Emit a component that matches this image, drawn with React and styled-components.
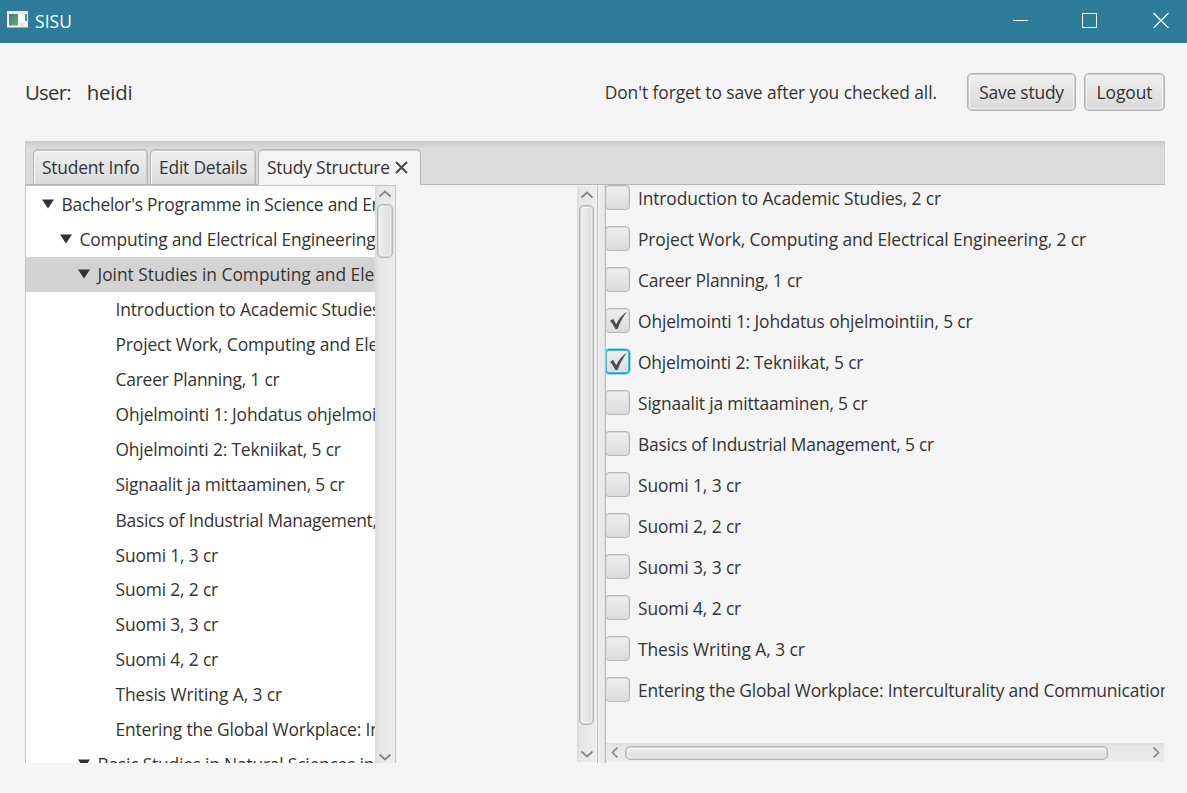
import React from 'react';
import styled, { createGlobalStyle } from 'styled-components';

const GlobalStyle = createGlobalStyle`
  * { box-sizing: border-box; }
  body {
    margin: 0;
    background: #f4f4f4;
    color: #333;
    font: 17.4px/24px "Open Sans", "Noto Sans", sans-serif;
    overflow: hidden;
  }
`;

const Label = styled.span`
  white-space: pre;
  letter-spacing: ${(p) => p.$ls ?? -0.2}px;
`;

const Window = styled.div`
  width: 1187px;
  height: 793px;
  display: flex;
  flex-direction: column;
`;

const TitleBar = styled.header`
  height: 43px;
  flex: none;
  display: flex;
  align-items: flex-start;
  padding: 10px 18px 0 6px;
  background: #2d7d9a;
  color: #fff;
`;

const Title = styled.div`
  margin-left: 6px;
  flex: 1;
  font-size: 17.4px;
  line-height: 23px;
`;

const Controls = styled.div`
  display: flex;
  gap: 54px;
  padding-top: 2px;
  svg:last-child { margin-left: 1px; }
`;

const Header = styled.div`
  height: 98px;
  flex: none;
  display: flex;
  align-items: center;
  padding: 0 22px 0 25px;
`;

const UserInfo = styled.div`
  flex: 1;
  display: flex;
  gap: 16px;
  font-size: 20.4px;
`;

const Button = styled.button`
  height: 38px;
  width: ${(p) => p.$w}px;
  margin-left: ${(p) => p.$gap}px;
  padding: 0;
  border: 1px solid #b5b5b5;
  border-radius: 5px;
  background: linear-gradient(#efefef, #d9d9d9);
  box-shadow: inset 0 0 0 1px #cacaca, inset 0 0 0 2px rgba(255, 255, 255, 0.6);
  color: #333;
  font: inherit;
`;

const TabPane = styled.section`
  width: 1140px;
  height: 622px;
  margin-left: 25px;
  display: flex;
  flex-direction: column;
`;

const TabStrip = styled.nav`
  height: 44px;
  flex: none;
  display: flex;
  align-items: flex-end;
  gap: 2px;
  padding-left: 7px;
  border-left: 1px solid #cfcfcf;
  background: linear-gradient(#cbcbcb, #dcdcdc 8px);
  box-shadow: inset 0 -1px #b5b5b5, inset -1px 0 #cfcfcf;
`;

const Tab = styled.div`
  width: ${(p) => p.$w}px;
  height: 36px;
  display: flex;
  align-items: center;
  padding-left: 8px;
  border: 1px solid #b5b5b5;
  border-bottom-color: ${(p) => (p.$active ? '#f4f4f4' : '#b0b0b0')};
  border-radius: 5px 5px 0 0;
  background: ${(p) => (p.$active ? '#f4f4f4' : 'linear-gradient(#efefef, #dadada)')};
  box-shadow: ${(p) => (p.$active ? 'inset 0 1px #d0d0d0' : 'inset 0 1px #cdcdcd, inset 1px 2px #f6f6f6, inset -1px 0 #d0d0d0')};
  svg { margin-left: 5px; }
`;

const Content = styled.div`
  flex: 1;
  min-height: 0;
  display: flex;
`;

const Tree = styled.div`
  width: 371px;
  display: flex;
  border: 1px solid #c4c4c4;
  border-bottom: none;
  background: #fff;
`;

const TreeRows = styled.div`
  flex: 1;
  min-width: 0;
  padding-top: 1px;
  overflow: hidden;
`;

const TreeRow = styled.div`
  height: 35px;
  display: flex;
  align-items: center;
  padding-left: ${(p) => p.$indent}px;
  padding-bottom: ${(p) => (p.$low ? 0 : 1)}px;
  padding-top: ${(p) => (p.$low ? 1 : 0)}px;
  background: ${(p) => (p.$selected ? '#d3d3d3' : 'transparent')};
  svg { flex: none; margin-right: 7.5px; }
`;

const Track = styled.div`
  flex: none;
  display: flex;
  flex-direction: ${(p) => (p.$horizontal ? 'row' : 'column')};
  align-items: center;
  ${(p) => (p.$horizontal
    ? 'height: 19px; margin-right: 1px; padding: 0 1px 0 2px; background: linear-gradient(#dadada, #e6e6e6 3px, #ececec);'
    : `width: ${p.$w}px; padding: ${p.$pad}; background: linear-gradient(90deg, #dadada, #e6e6e6 3px, #ececec);`)}
`;

const Thumb = styled.div`
  ${(p) => (p.$horizontal
    ? `height: 14px; width: ${p.$size}px; margin: 1px auto 0 3px; background: linear-gradient(#f0f0f0, #dadada);`
    : `width: ${p.$w}px; height: ${p.$size}px; margin: 4px 0 auto; background: linear-gradient(90deg, #f0f0f0, #dcdcdc);`)}
  border: 1px solid #b5b5b5;
  border-radius: 5px;
  box-shadow: inset 0 0 0 1px #d2d2d2, inset 0 0 0 2px rgba(255, 255, 255, 0.4);
`;

const MiddlePane = styled.div`
  width: 201px;
  display: flex;
  justify-content: flex-end;
  padding: 1px 1px 1px 0;
`;

const Divider = styled.div`
  width: 9px;
  border: solid #bdbdbd;
  border-width: 0 1px;
  background: linear-gradient(90deg, #f4f4f4, #e8e8e8 40%, #ededed 75%, #d6d6d6);
`;

const CoursePane = styled.div`
  flex: 1;
  min-width: 0;
  display: flex;
  flex-direction: column;
  padding-bottom: 1px;
`;

const CourseList = styled.div`
  flex: 1;
  min-height: 0;
  display: flex;
  flex-direction: column;
  gap: 16px;
  overflow: hidden;
`;

const CourseRow = styled.label`
  height: 25px;
  flex: none;
  display: flex;
  align-items: center;
  gap: 8px;
  margin-left: -1px;
`;

const CheckBox = styled.span`
  width: 25px;
  height: 25px;
  flex: none;
  display: flex;
  align-items: center;
  justify-content: center;
  padding-left: 1px;
  border: 1px solid ${(p) => (p.$focused ? '#039ed3' : '#b7b7b7')};
  border-radius: 4px;
  background: linear-gradient(#efefef, #dbdbdb);
  box-shadow: inset 0 0 0 1px ${(p) => (p.$focused ? '#4db9de, 0 0 0 1px #a5dcee' : '#dadada')};
`;

const AppIcon = () => (
  <svg width="23" height="19" viewBox="0 0 23 19">
    <defs>
      <linearGradient id="scene" x1="0" y1="0" x2="1" y2="1">
        <stop offset="0" stopColor="#3f719b" />
        <stop offset="1" stopColor="#5cb85f" />
      </linearGradient>
    </defs>
    <rect x="0.5" y="1" width="22" height="17.5" fill="#60717b" />
    <rect x="1" y="1" width="21" height="16.5" fill="#e6e6e4" />
    <rect x="2" y="3.5" width="19" height="13" fill="#f4f4f2" />
    <rect x="3" y="4" width="9" height="11.5" fill="url(#scene)" />
    <rect x="14" y="4" width="4" height="8" fill="#fff" />
    <rect x="14" y="13" width="4" height="3" fill="#e4e4e4" />
    <rect x="19" y="4" width="2" height="7" fill="#4c9480" />
  </svg>
);

const Disclosure = () => (
  <svg width="12" height="10" viewBox="0 0 12 10"><path d="M0 0.5H12L6 9.5Z" fill="#333" /></svg>
);

const ARROWS = {
  up: 'M1.5 8.5L7 3.5L12.5 8.5',
  down: 'M1.5 3.5L7 8.5L12.5 3.5',
  left: 'M9.5 1.5L4.5 6.5L9.5 11.5',
  right: 'M4.5 1.5L9.5 6.5L4.5 11.5',
};

const ArrowSvg = styled.svg`
  flex: none;
`;

const Arrow = ({ dir }) => {
  const h = dir === 'up' || dir === 'down' ? 12 : 13;
  return (
    <ArrowSvg width="14" height={h} viewBox={`0 0 14 ${h}`}>
      <path d={ARROWS[dir]} fill="none" stroke="#858585" strokeWidth="1.7" />
    </ArrowSvg>
  );
};

const Check = () => (
  <svg width="19" height="19" viewBox="0 0 19 19">
    <path d="M1 9.8L4.2 8L7.2 13.2C9.6 8.2 13 3.8 18 0.5C13.8 6 10.8 11.5 8.6 18H6.4C4.8 14.8 3 12 1 9.8Z" fill="#4d4d4d" />
  </svg>
);

const tree = [
  { text: "Bachelor's Programme in Science and Engineering", level: 0, open: true, ls: -0.24 },
  { text: 'Computing and Electrical Engineering, 180 cr', level: 1, open: true, ls: -0.17 },
  { text: 'Joint Studies in Computing and Electrical Engineering', level: 2, open: true, selected: true, ls: -0.03 },
  { text: 'Introduction to Academic Studies, 2 cr', level: 3, ls: -0.12 },
  { text: 'Project Work, Computing and Electrical Engineering, 2 cr', level: 3, ls: -0.12 },
  { text: 'Career Planning, 1 cr', level: 3 },
  { text: 'Ohjelmointi 1: Johdatus ohjelmointiin, 5 cr', level: 3, ls: -0.13 },
  { text: 'Ohjelmointi 2: Tekniikat, 5 cr', level: 3, ls: -0.17 },
  { text: 'Signaalit ja mittaaminen, 5 cr', level: 3, ls: -0.17 },
  { text: 'Basics of Industrial Management, 5 cr', level: 3, low: true, ls: -0.24 },
  { text: 'Suomi 1, 3 cr', level: 3, low: true, ls: -0.15 },
  { text: 'Suomi 2, 2 cr', level: 3, ls: -0.15 },
  { text: 'Suomi 3, 3 cr', level: 3, ls: -0.15 },
  { text: 'Suomi 4, 2 cr', level: 3, ls: -0.15 },
  { text: 'Thesis Writing A, 3 cr', level: 3, ls: -0.07 },
  { text: 'Entering the Global Workplace: Interculturality and Communication', level: 3, ls: -0.16 },
  { text: 'Basic Studies in Natural Sciences in Engineering', level: 2, open: true, ls: -0.2 },
];

const courses = [
  { text: 'Introduction to Academic Studies, 2 cr', ls: -0.12 },
  { text: 'Project Work, Computing and Electrical Engineering, 2 cr', ls: -0.11 },
  { text: 'Career Planning, 1 cr' },
  { text: 'Ohjelmointi 1: Johdatus ohjelmointiin, 5 cr', checked: true, ls: -0.13 },
  { text: 'Ohjelmointi 2: Tekniikat, 5 cr', checked: true, focused: true, ls: -0.17 },
  { text: 'Signaalit ja mittaaminen, 5 cr', ls: -0.16 },
  { text: 'Basics of Industrial Management, 5 cr' },
  { text: 'Suomi 1, 3 cr', ls: -0.11 },
  { text: 'Suomi 2, 2 cr', ls: -0.11 },
  { text: 'Suomi 3, 3 cr', ls: -0.11 },
  { text: 'Suomi 4, 2 cr', ls: -0.11 },
  { text: 'Thesis Writing A, 3 cr', ls: -0.06 },
  { text: 'Entering the Global Workplace: Interculturality and Communication', ls: -0.17 },
];

export default function App() {
  return (
    <Window>
      <GlobalStyle />
      <TitleBar>
        <AppIcon />
        <Title><Label $ls={0.1}>SISU</Label></Title>
        <Controls>
          <svg width="15" height="16"><path d="M0 8.5H15" stroke="#fff" /></svg>
          <svg width="16" height="16"><rect x="0.5" y="1.5" width="14" height="14" fill="none" stroke="#fff" /></svg>
          <svg width="16" height="16"><path d="M0.5 1L15.5 16M15.5 1L0.5 16" stroke="#fff" strokeWidth="1.2" /></svg>
        </Controls>
      </TitleBar>
      <Header>
        <UserInfo>
          <Label $ls={-0.8}>User:</Label>
          <Label $ls={-0.2}>heidi</Label>
        </UserInfo>
        <Label $ls={-0.07}>Don't forget to save after you checked all.</Label>
        <Button $w={109} $gap={30}><Label>Save study</Label></Button>
        <Button $w={81} $gap={8}><Label $ls={-0.05}>Logout</Label></Button>
      </Header>
      <TabPane>
        <TabStrip>
          <Tab $w={115}><Label>Student Info</Label></Tab>
          <Tab $w={106}><Label>Edit Details</Label></Tab>
          <Tab $w={163} $active>
            <Label>Study Structure</Label>
            <svg width="13" height="13"><path d="M1 1L12 12M12 1L1 12" stroke="#4d4d4d" strokeWidth="2.2" /></svg>
          </Tab>
        </TabStrip>
        <Content>
          <Tree>
            <TreeRows>
              {tree.map((n) => (
                <TreeRow key={n.text} $indent={n.open ? 16 + n.level * 18 : 89.5} $selected={n.selected} $low={n.low}>
                  {n.open && <Disclosure />}
                  <Label $ls={n.ls}>{n.text}</Label>
                </TreeRow>
              ))}
            </TreeRows>
            <Track $w={20} $pad="2px 0 0">
              <Arrow dir="up" />
              <Thumb $w={16} $size={54} />
              <Arrow dir="down" />
            </Track>
          </Tree>
          <MiddlePane>
            <Track $w={19} $pad="3px 0 2px">
              <Arrow dir="up" />
              <Thumb $w={15} $size={520} />
              <Arrow dir="down" />
            </Track>
          </MiddlePane>
          <Divider />
          <CoursePane>
            <CourseList>
              {courses.map((c) => (
                <CourseRow key={c.text}>
                  <CheckBox $focused={c.focused}>{c.checked && <Check />}</CheckBox>
                  <Label $ls={c.ls}>{c.text}</Label>
                </CourseRow>
              ))}
            </CourseList>
            <Track $horizontal>
              <Arrow dir="left" />
              <Thumb $horizontal $size={483} />
              <Arrow dir="right" />
            </Track>
          </CoursePane>
        </Content>
      </TabPane>
    </Window>
  );
}
